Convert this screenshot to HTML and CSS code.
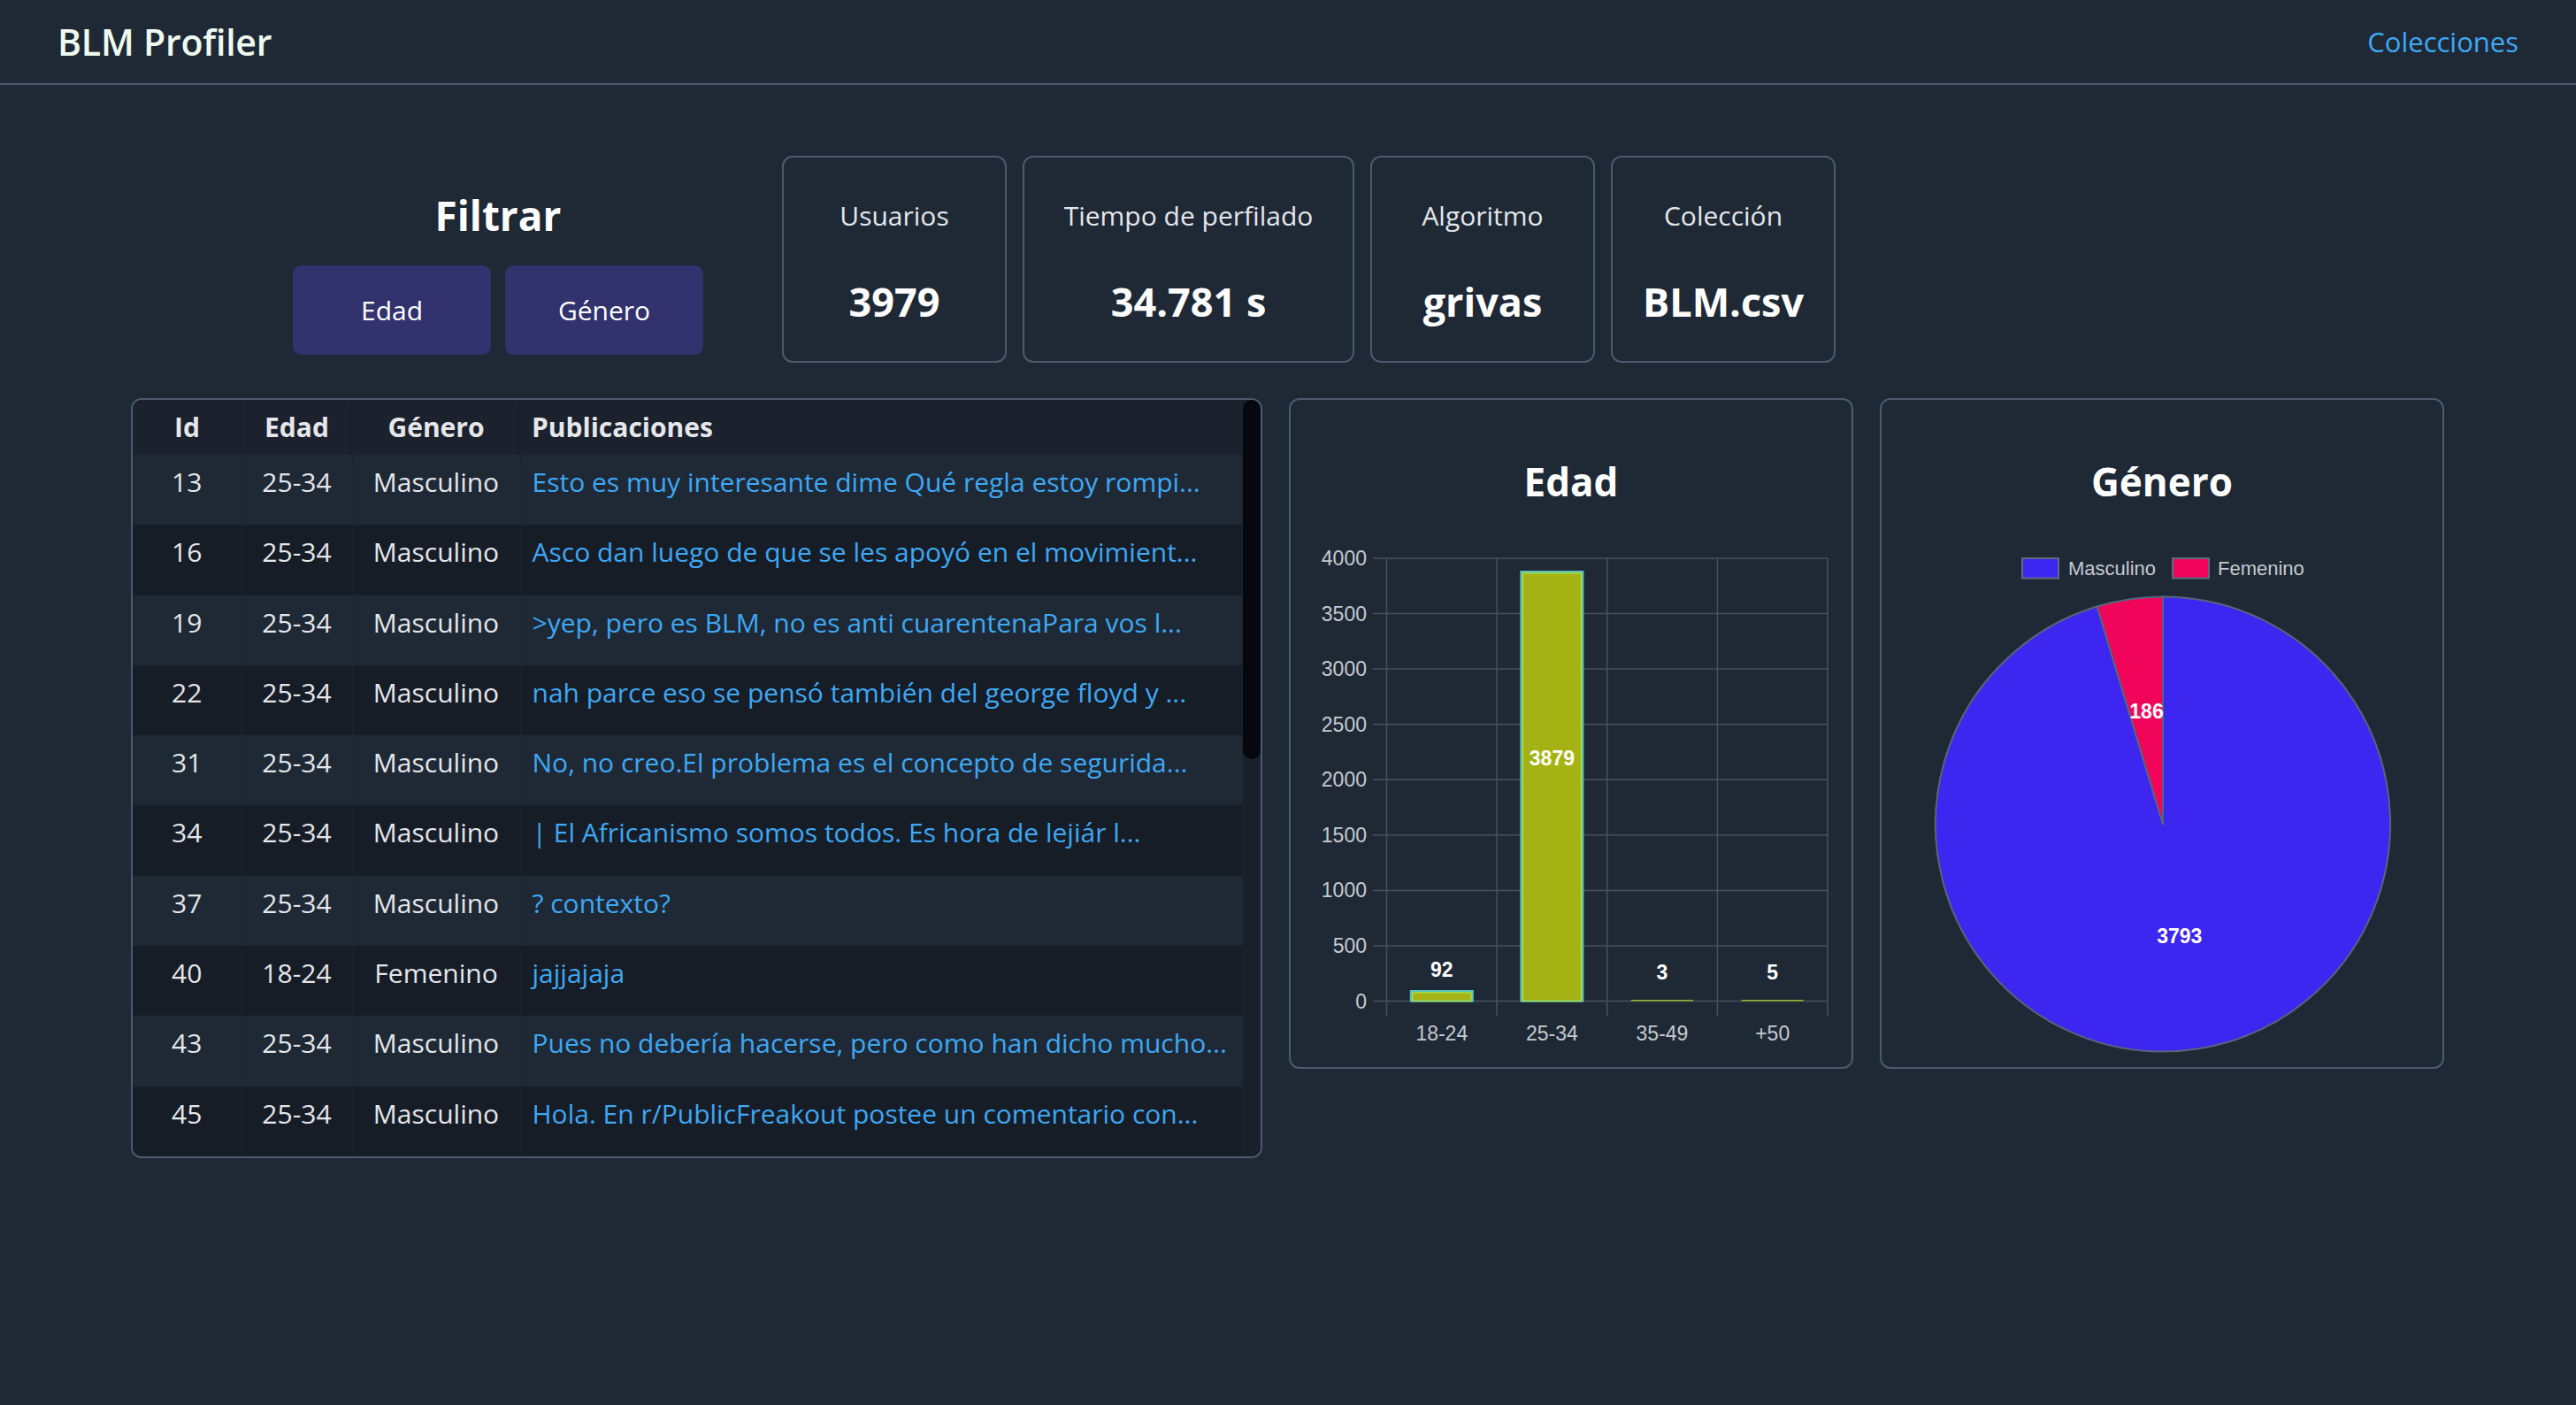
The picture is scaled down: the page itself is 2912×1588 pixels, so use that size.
FILE: index.html
```html
<!DOCTYPE html>
<html lang="es">
<head>
<meta charset="utf-8">
<title>BLM Profiler</title>
<link rel="stylesheet" href="styles.css">
</head>
<body>
<nav class="navbar">
  <span class="brand">BLM Profiler</span>
  <a class="nav-link" href="#">Colecciones</a>
</nav>
<main class="container">
  <section class="top-row">
    <div class="filter">
      <h2 class="filter-title">Filtrar</h2>
      <div class="filter-buttons">
        <button class="btn">Edad</button>
        <button class="btn">Género</button>
      </div>
    </div>
    <div class="stats">
      <div class="stat"><div class="stat-label">Usuarios</div><div class="stat-value">3979</div></div>
      <div class="stat wide"><div class="stat-label">Tiempo de perfilado</div><div class="stat-value">34.781 s</div></div>
      <div class="stat"><div class="stat-label">Algoritmo</div><div class="stat-value">grivas</div></div>
      <div class="stat"><div class="stat-label">Colección</div><div class="stat-value">BLM.csv</div></div>
    </div>
  </section>

  <section class="bottom-row">
    <div class="table-box">
      <div class="table-scroll">
        <table class="users">
          <colgroup>
            <col class="c-id"><col class="c-age"><col class="c-gender"><col class="c-posts">
          </colgroup>
          <thead>
            <tr><th>Id</th><th>Edad</th><th>Género</th><th class="left">Publicaciones</th></tr>
          </thead>
          <tbody>
            <tr><td>13</td><td>25-34</td><td>Masculino</td><td class="left"><a href="#">Esto es muy interesante dime Qué regla estoy rompi...</a></td></tr>
            <tr><td>16</td><td>25-34</td><td>Masculino</td><td class="left"><a href="#">Asco dan luego de que se les apoyó en el movimient...</a></td></tr>
            <tr><td>19</td><td>25-34</td><td>Masculino</td><td class="left"><a href="#">&gt;yep, pero es BLM, no es anti cuarentenaPara vos l...</a></td></tr>
            <tr><td>22</td><td>25-34</td><td>Masculino</td><td class="left"><a href="#">nah parce eso se pensó también del george floyd y ...</a></td></tr>
            <tr><td>31</td><td>25-34</td><td>Masculino</td><td class="left"><a href="#">No, no creo.El problema es el concepto de segurida...</a></td></tr>
            <tr><td>34</td><td>25-34</td><td>Masculino</td><td class="left"><a href="#">| El Africanismo somos todos. Es hora de lejiár l...</a></td></tr>
            <tr><td>37</td><td>25-34</td><td>Masculino</td><td class="left"><a href="#">? contexto?</a></td></tr>
            <tr><td>40</td><td>18-24</td><td>Femenino</td><td class="left"><a href="#">jajjajaja</a></td></tr>
            <tr><td>43</td><td>25-34</td><td>Masculino</td><td class="left"><a href="#">Pues no debería hacerse, pero como han dicho mucho...</a></td></tr>
            <tr><td>45</td><td>25-34</td><td>Masculino</td><td class="left"><a href="#">Hola. En r/PublicFreakout postee un comentario con...</a></td></tr>
          </tbody>
        </table>
      </div>
      <div class="scrollbar"><div class="thumb"></div></div>
    </div>

    <div class="chart-card">
      <h3 class="chart-title">Edad</h3>
      <svg class="chart" width="634" height="605" viewBox="0 0 634 605">
        <g class="grid">
          <line x1="93" y1="32" x2="607" y2="32"/>
          <line x1="93" y1="94.6" x2="607" y2="94.6"/>
          <line x1="93" y1="157.1" x2="607" y2="157.1"/>
          <line x1="93" y1="219.7" x2="607" y2="219.7"/>
          <line x1="93" y1="282.3" x2="607" y2="282.3"/>
          <line x1="93" y1="344.8" x2="607" y2="344.8"/>
          <line x1="93" y1="407.4" x2="607" y2="407.4"/>
          <line x1="93" y1="469.9" x2="607" y2="469.9"/>
          <line x1="93" y1="532.5" x2="607" y2="532.5"/>
          <line x1="108.5" y1="32" x2="108.5" y2="549"/>
          <line x1="233.1" y1="32" x2="233.1" y2="549"/>
          <line x1="357.7" y1="32" x2="357.7" y2="549"/>
          <line x1="482.4" y1="32" x2="482.4" y2="549"/>
          <line x1="607" y1="32" x2="607" y2="549"/>
        </g>
        <g class="axis-label y-labels">
          <text x="86" y="40">4000</text>
          <text x="86" y="102.6">3500</text>
          <text x="86" y="165.1">3000</text>
          <text x="86" y="227.7">2500</text>
          <text x="86" y="290.3">2000</text>
          <text x="86" y="352.8">1500</text>
          <text x="86" y="415.4">1000</text>
          <text x="86" y="477.9">500</text>
          <text x="86" y="540.5">0</text>
        </g>
        <g class="axis-label x-labels">
          <text x="170.8" y="577">18-24</text>
          <text x="295.4" y="577">25-34</text>
          <text x="420" y="577">35-49</text>
          <text x="544.7" y="577">+50</text>
        </g>
        <g class="bars">
          <rect x="135.8" y="521" width="70" height="11.5"/>
          <rect x="260.4" y="47" width="70" height="485.5"/>
        </g>
        <g class="bars-inner">
          <rect x="137.8" y="523" width="66" height="9.5"/>
          <rect x="262.4" y="49" width="66" height="483.5"/>
        </g>
        <g class="bars-flat">
          <rect x="385" y="531" width="70" height="1.5"/>
          <rect x="509.7" y="531" width="70" height="1.5"/>
        </g>
        <g class="data-label">
          <text x="170.8" y="505">92</text>
          <text x="295.4" y="266">3879</text>
          <text x="420" y="508">3</text>
          <text x="544.7" y="508">5</text>
        </g>
      </svg>
    </div>

    <div class="chart-card">
      <h3 class="chart-title">Género</h3>
      <svg class="chart" width="634" height="605" viewBox="0 0 634 605">
        <g class="legend">
          <rect class="male" x="159" y="32" width="41" height="22.5"/>
          <text x="211" y="51">Masculino</text>
          <rect class="female" x="329" y="32" width="41" height="22.5"/>
          <text x="380" y="51">Femenino</text>
        </g>
        <g class="pie">
          <path class="male" d="M318 332.5 L318 75.5 A257 257 0 1 1 243.6 86.51 Z"/>
          <path class="female" d="M318 332.5 L243.6 86.51 A257 257 0 0 1 318 75.5 Z"/>
        </g>
        <g class="data-label">
          <text x="299.5" y="213">186</text>
          <text x="336.8" y="467">3793</text>
        </g>
      </svg>
    </div>
  </section>
</main>
</body>
</html>
```

FILE: styles.css
```css
* { box-sizing: border-box; }

html, body {
  margin: 0;
  padding: 0;
}

body {
  background: #1f2936;
  color: #e4e6ea;
  font-family: "Open Sans", "Noto Sans", sans-serif;
  min-height: 1588px;
}

/* ---------- navbar ---------- */
.navbar {
  height: 96px;
  border-bottom: 2px solid #4b5a6f;
  display: flex;
  align-items: center;
  justify-content: space-between;
  padding: 0 65px;
}

.brand {
  font-size: 41px;
  font-weight: 600;
  color: #eefaef;
  letter-spacing: -0.2px;
}

.nav-link {
  font-size: 31px;
  color: #3ea8f3;
  text-decoration: none;
}

/* ---------- layout ---------- */
.container {
  padding: 80px 148px 0;
}

.top-row {
  display: flex;
  align-items: flex-start;
  gap: 89px;
  padding-left: 183px;
}

.filter {
  margin-top: 40px;
  width: 464px;
  display: flex;
  flex-direction: column;
  align-items: center;
}

.filter-title {
  margin: 0;
  font-size: 46px;
  line-height: 55px;
  font-weight: 700;
  color: #ffffff;
}

.filter-buttons {
  margin-top: 29px;
  display: flex;
  gap: 16px;
}

.btn {
  width: 224px;
  height: 101px;
  border: 0;
  border-radius: 10px;
  background: #32326e;
  color: #ffffff;
  font-family: inherit;
  font-size: 30px;
  padding: 0;
}

.stats {
  display: flex;
  gap: 18px;
}

.stat {
  width: 254px;
  height: 234px;
  border: 2px solid #4b5a6f;
  border-radius: 12px;
  text-align: center;
  padding-top: 48px;
}

.stat.wide { width: 375px; }

.stat-label {
  font-size: 30px;
  line-height: 36px;
  color: #e4e6ea;
  white-space: nowrap;
}

.stat-value {
  margin-top: 52px;
  font-size: 45px;
  line-height: 54px;
  font-weight: 700;
  color: #ffffff;
  white-space: nowrap;
}

.bottom-row {
  margin-top: 40px;
  display: flex;
  align-items: flex-start;
  gap: 30px;
}

/* ---------- table ---------- */
.table-box {
  width: 1279px;
  height: 859px;
  border: 2px solid #4b5a6f;
  border-radius: 12px;
  overflow: hidden;
  display: flex;
  background: #19202a;
}

.table-scroll {
  flex: 1;
  min-width: 0;
}

.users {
  width: 100%;
  border-collapse: collapse;
  table-layout: fixed;
  font-size: 30px;
}

.c-id { width: 123px; }
.c-age { width: 125px; }
.c-gender { width: 190px; }

.users th {
  height: 62px;
  background: #1b222e;
  color: #e6e7ea;
  font-weight: 700;
  line-height: 36px;
  padding: 0;
  text-align: center;
  box-shadow: 0 3px 4px rgba(0, 0, 0, 0.18);
}

.users tbody tr { height: 79.3px; }

.users tbody tr:nth-child(odd) { background: #1f2936; }
.users tbody tr:nth-child(even) { background: #171d27; }

.users td {
  padding: 13px 0 0;
  vertical-align: top;
  line-height: 36px;
  text-align: center;
  color: #e4e6ea;
  white-space: nowrap;
  overflow: hidden;
  border-right: 1px solid rgba(255, 255, 255, 0.02);
}

.users .left {
  text-align: left;
  padding-left: 13px;
}

.users a {
  color: #3ea8f3;
  text-decoration: none;
}

.scrollbar {
  width: 20px;
  background: #1a2029;
}

.thumb {
  height: 406px;
  background: #05090f;
  border-radius: 10px;
}

/* ---------- charts ---------- */
.chart-card {
  width: 638px;
  height: 758px;
  border: 2px solid #4b5a6f;
  border-radius: 12px;
  padding-top: 66px;
  text-align: center;
}

.chart-title {
  margin: 0;
  font-size: 44px;
  line-height: 53px;
  font-weight: 700;
  color: #ffffff;
}

.chart {
  display: block;
  margin-top: 28px;
}

.grid line {
  stroke: #48515e;
  stroke-width: 1.5;
}

.axis-label text {
  font-family: "Liberation Sans", Arial, sans-serif;
  font-size: 23px;
  fill: #c5c9d0;
}

.y-labels text { text-anchor: end; }
.x-labels text { text-anchor: middle; }

.bars rect {
  fill: #a4b313;
  stroke: #57c4c4;
  stroke-width: 2;
}

.bars-inner rect {
  fill: none;
  stroke: #a6dc4e;
  stroke-width: 1.5;
}

.bars-flat rect {
  fill: #8fb82c;
  stroke: none;
}

.data-label text {
  font-family: "Liberation Sans", Arial, sans-serif;
  font-size: 23px;
  font-weight: 700;
  fill: #ffffff;
  text-anchor: middle;
}

.legend rect {
  stroke: #5a6b80;
  stroke-width: 2;
}

.legend text {
  font-family: "Liberation Sans", Arial, sans-serif;
  font-size: 22px;
  fill: #c5c9d0;
}

.male { fill: #3c26f0; }
.female { fill: #f0055a; }

.pie path {
  stroke: #56667c;
  stroke-width: 2;
  stroke-linejoin: round;
}
```
